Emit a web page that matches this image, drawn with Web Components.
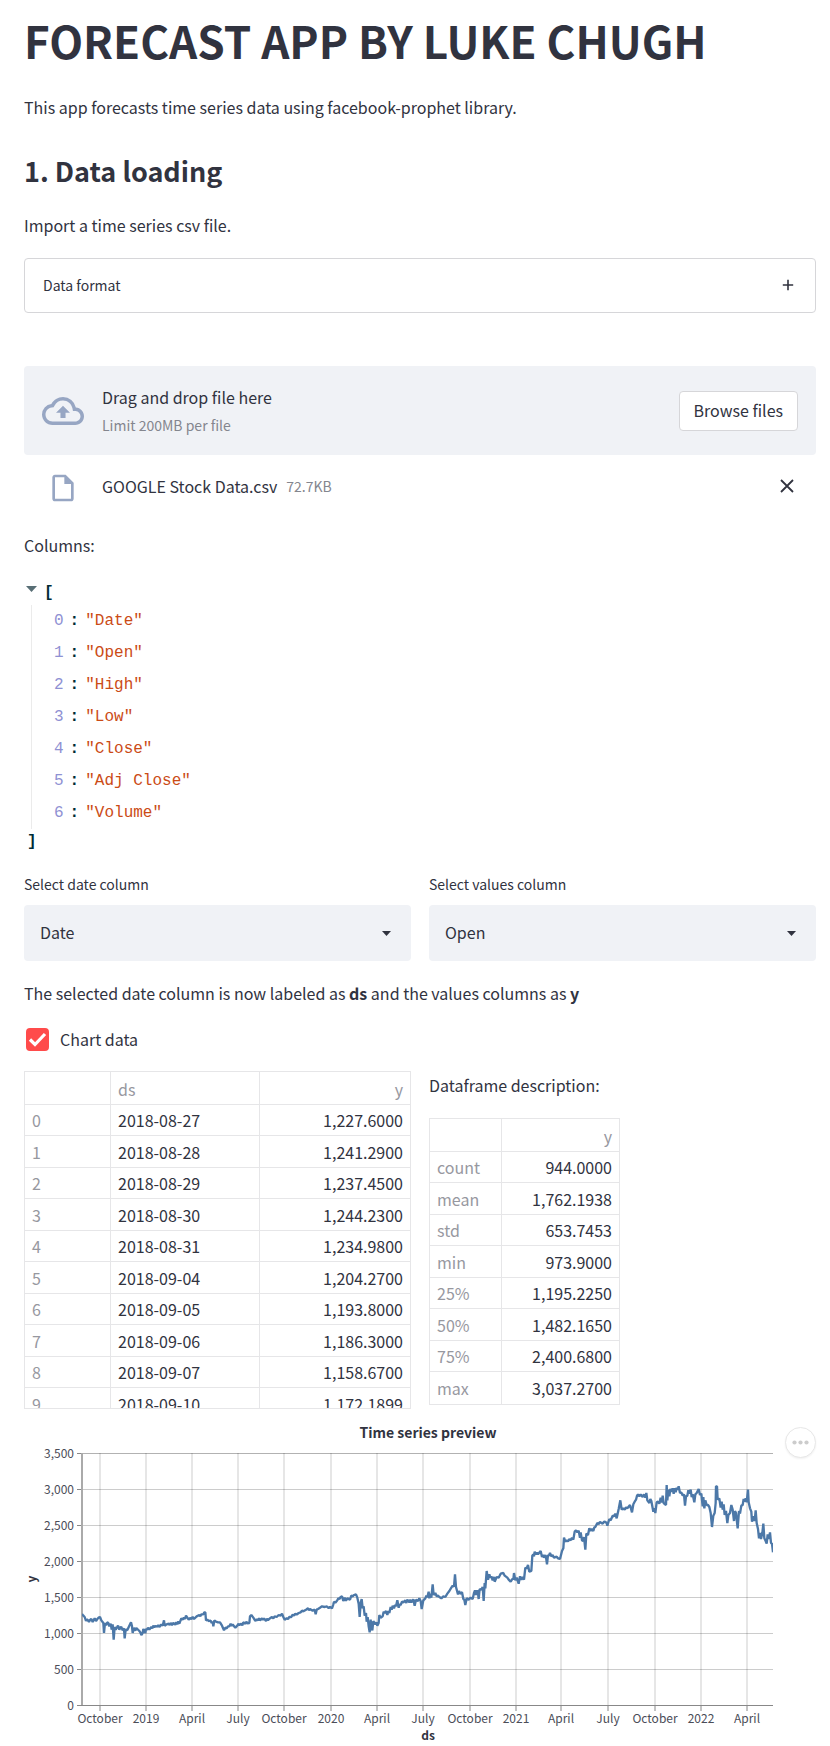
<!DOCTYPE html>
<html lang="en">
<head>
<meta charset="utf-8">
<meta name="viewport" content="width=device-width, initial-scale=1">
<title>Forecast app</title>
<style>
  html { background: #fff; }
  body {
    margin: 0;
    color: #31333f;
    font-family: "Noto Sans CJK SC", "Noto Sans", sans-serif;
    font-size: 16px;
    line-height: 28px;
  }
</style>
</head>
<body>
<forecast-app></forecast-app>

<script>
const define = (name, html, setup) => {
  const template = document.createElement('template');
  template.innerHTML = '<style>*{box-sizing:border-box}:host{display:block}</style>' + html;
  customElements.define(name, class extends HTMLElement {
    connectedCallback() {
      if (this.shadowRoot) return;
      const root = this.attachShadow({ mode: 'open' });
      root.append(template.content.cloneNode(true));
      if (setup) setup(this, root);
    }
  });
};

define('app-expander', `
  <style>
    details { border: 1px solid #d6d6d9; border-radius: 4px; }
    summary { display: flex; align-items: center; justify-content: space-between;
      padding: 13px 21px 14px 18px; font-size: 14px; line-height: 26px; list-style: none; cursor: pointer; }
    svg { display: block; }
    .body { padding: 0 18px 14px; }
  </style>
  <details>
    <summary><slot name="title"></slot>
      <svg width="12" height="12" viewBox="0 0 12 12" fill="none" stroke="#31333f" stroke-width="1.6"><path d="M6 .8v10.400M.8 6h10.400"/></svg>
    </summary>
    <div class="body"><slot></slot></div>
  </details>`);

define('file-uploader', `
  <style>
    .drop { display: flex; align-items: center; padding: 16px 18px; min-height: 89px;
      background: #f0f2f6; border-radius: 4px; }
    .icon { flex: none; width: 42px; margin-right: 18px; display: flex; justify-content: center; }
    .text { flex: 1; display: flex; flex-direction: column; }
    .drop svg, .file svg { display: block; fill: #97a6c3; }
    .small { font-size: 14px; color: #84868e; }
    button { font: inherit; color: inherit; cursor: pointer; }
    .browse { height: 40px; padding: 0 14px 2px; line-height: 28px; background: #fff;
      border: 1px solid #d6d6d9; border-radius: 4px; }
    .file { display: flex; align-items: center; padding: 12px 20px 2px 18px; }
    .file .icon { margin-top: 5px; }
    .file .text { flex-direction: row; gap: 9px; }
    .remove { display: flex; padding: 2px; border: 0; background: none; }
    .remove svg { fill: none; stroke: #31333f; stroke-width: 1.800; }
  </style>
  <div class="drop">
    <span class="icon"><svg width="42" height="42" viewBox="0 0 24 24"><path d="M19.350 10.040A7.490 7.490 0 0 0 12 4C9.110 4 6.600 5.640 5.350 8.040A5.994 5.994 0 0 0 0 14c0 3.310 2.690 6 6 6h13c2.760 0 5-2.240 5-5 0-2.640-2.050-4.780-4.650-4.960zM19 18H6c-2.210 0-4-1.790-4-4 0-2.050 1.530-3.760 3.560-3.970l1.070-.110.5-.950A5.469 5.469 0 0 1 12 6c2.620 0 4.880 1.860 5.390 4.430l.3 1.500 1.530.110A2.980 2.980 0 0 1 22 15c0 1.650-1.350 3-3 3zM8 13h2.550v3h2.900v-3H16l-4-4z"/></svg></span>
    <label class="text" for="file"><span>Drag and drop file here</span><span class="small">Limit 200MB per file</span></label>
    <input id="file" type="file" hidden>
    <button class="browse" type="button">Browse files</button>
  </div>
  <div class="file">
    <span class="icon"><svg width="32" height="32" viewBox="0 0 24 24"><path d="M14 2H6c-1.100 0-1.990.9-1.990 2L4 20c0 1.100.890 2 1.990 2H18c1.100 0 2-.9 2-2V8l-6-6zM6 20V4h7v5h5v11H6z"/></svg></span>
    <span class="text"><span>GOOGLE Stock Data.csv</span><span class="small">72.7KB</span></span>
    <button class="remove" type="button" aria-label="Remove file"><svg width="14" height="14" viewBox="0 0 14 14"><path d="M1 1l12 12M13 1L1 13"/></svg></button>
  </div>`, (host, root) => {
    root.querySelector('.browse').onclick = () => root.querySelector('#file').click();
  });

define('json-list', `
  <style>
    :host { font-family: "Liberation Mono", monospace; font-size: 16px; line-height: 32px; color: #002b36; }
    .open { display: flex; align-items: center; gap: 6px; line-height: 24px; font-weight: bold; }
    .toggle { padding: 0 1px 8px 2px; border: 0; background: none; display: flex; cursor: pointer; }
    ol { list-style: none; margin: 0 0 0 7px; padding: 0 0 0 22px; border-left: 1px solid #ebebeb; }
    li { display: flex; gap: 6px; }
    .key { color: #8f91d3; }
    .colon { font-weight: bold; }
    .value { color: #cb4b16; }
    .close { line-height: 26px; font-weight: bold; padding-left: 3px; }
  </style>
  <div class="open"><button class="toggle" aria-label="Collapse"><svg width="11" height="6" viewBox="0 0 11 6" fill="#586e75"><path d="M0 0h11L5.500 6z"/></svg></button><span>[</span></div>
  <ol></ol>
  <div class="close">]</div>`, (host, root) => {
    root.querySelector('ol').innerHTML = host.getAttribute('items').split(',').map((v, i) =>
      `<li><span class="key">${i}</span><span class="colon">:</span><span class="value">"${v}"</span></li>`).join('');
  });

define('select-field', `
  <style>
    label { display: block; font-size: 14px; line-height: 24px; margin-bottom: 9px; }
    .box { display: grid; align-items: center; background: #f0f2f6; border-radius: 4px; }
    select, svg { grid-area: 1 / 1; }
    select { appearance: none; width: 100%; height: 56px; padding: 0 40px 2px 16px; border: 0; background: none;
      font: inherit; color: inherit; }
    svg { justify-self: end; margin-right: 20px; fill: #31333f; pointer-events: none; }
  </style>
  <label for="field"></label>
  <div class="box">
    <select id="field"></select>
    <svg width="9" height="5" viewBox="0 0 9 5"><path d="M0 0h9L4.500 5z"/></svg>
  </div>`, (host, root) => {
    root.querySelector('label').textContent = host.getAttribute('label');
    root.querySelector('select').innerHTML = host.getAttribute('options').split(',').map(o =>
      `<option${o === host.getAttribute('value') ? ' selected' : ''}>${o}</option>`).join('');
  });

define('check-field', `
  <style>
    label { display: flex; align-items: center; gap: 11px; padding-left: 2px; }
    .box { display: grid; width: 23px; height: 23px; }
    input, svg { grid-area: 1 / 1; }
    input { appearance: none; margin: 0; width: 23px; height: 23px; border: 2px solid #a3a8b4; border-radius: 4px; }
    input:checked { background: #ff4b4b; border-color: #ff4b4b; }
    svg { pointer-events: none; fill: none; stroke: #fff; stroke-width: 3.200; }
    input:not(:checked) + svg { display: none; }
  </style>
  <label><span class="box"><input type="checkbox" checked><svg width="23" height="23" viewBox="0 0 23 23"><path d="M4 11.500l5 5L19 6"/></svg></span><slot></slot></label>`);

define('data-frame', `
  <style>
    :host { border: 1px solid #e6e6e8; overflow: hidden; }
    table { width: 100%; border-spacing: 0; table-layout: fixed; line-height: 24px; }
    th, td { height: 31px; padding: 3px 7px; border-right: 1px solid #e6e6e8; border-bottom: 1px solid #e6e6e8;
      text-align: left; font-weight: normal; white-space: nowrap; }
    th { color: #97989f; }
    tr:nth-child(even) > * { height: 32px; }
    thead th { height: 32px; padding-top: 5px; }
    tr > :last-child { border-right: 0; text-align: right; }
    :host([fit]) tbody tr:last-child > * { border-bottom: 0; }
  </style>
  <table><colgroup></colgroup><thead></thead><tbody></tbody></table>`, (host, root) => {
    const rows = host.getAttribute('rows').split(';').map(r => r.split('|'));
    const head = host.getAttribute('head').split('|');
    root.querySelector('colgroup').innerHTML = host.getAttribute('cols').split('|').map(w => `<col style="width:${w}">`).join('');
    root.querySelector('thead').innerHTML = '<tr>' + head.map(h => `<th scope="col">${h}</th>`).join('') + '</tr>';
    root.querySelector('tbody').innerHTML = rows.map(r =>
      '<tr>' + r.map((c, i) => i ? `<td>${c}</td>` : `<th scope="row">${c}</th>`).join('') + '</tr>').join('');
  });

/* Price line, stored as x,y pairs at three units per pixel of the plot area. */
const SERIES = [
  [240, 510, '6,103 10,108 14,112 18,124 21,119 24,122 27,127 30,121 34,118 38,127 44,116 48,124 52,118 56,114 60,112 64,122 70,130 72,160 75,130 78,137 81,130 84,128 88,140 92,132 95,150 98,134 101,180 104,142 107,150 110,145 114,138 118,150 121,143 124,142 128,152 132,146 134,176 137,150 142,151 148,138 153,128 156,140 158,160 162,144 166,153 169,145 172,148 178,154 181,158 184,166 188,160 190,148 193,153 196,160 198,148 201,150 204,144 208,150 214,142 217,146 220,138 223,143 226,139 232,141 235,136 238,142 244,134 248,138 252,122 254,138 260,134 266,132 269,136 272,130 276,136 280,130 286,135 289,128 292,134 295,125 298,132 304,116 308,120 312,114 315,118 318,108 322,114 326,120 330,115 334,118 338,112 342,118 350,110 358,106 361,110 364,104 370,104 373,98 376,98 378,122 382,120 386,124 392,123 395,130 398,126 400,140 403,122 408,126 414,128 420,128 426,138 432,152 436,144 440,146 444,140 448,140 452,132 455,139 458,134 464,142 466,144 472,138 475,132 478,136 484,132 487,137 490,128 496,132 499,126 502,131 508,130 510,110 514,106 520,114 526,124 530,119 534,122 537,116 540,122 546,116 549,121 552,116 558,124 561,117 564,121 570,116 576,112 580,116 584,110 590,112 596,106 602,108 606,102 610,112 614,120 620,116 624,118 628,112 634,112 638,105 642,108 646,102 650,105 656,100 662,98 666,93 670,95 678,90 684,86 687,92 690,88 698,93 704,90 707,104 710,90 714,88 720,84'],
  [930, 360, '36,230 44,232 50,230 56,235 60,232 66,236 70,224 72,216 76,219 82,212 85,206 88,208 92,202 96,200 100,214 104,204 108,213 112,206 120,210 124,198 128,200 132,196 138,194 142,204 146,222 149,262 152,220 155,208 158,236 161,230 164,258 168,250 170,276 173,262 176,290 179,308 182,270 184,296 187,302 190,274 196,284 199,278 202,288 206,280 208,256 212,264 218,260 221,246 224,250 228,244 232,256 235,244 238,250 242,232 245,240 248,228 252,236 255,226 258,230 262,212 266,234 269,224 272,226 276,216 280,218 286,212 289,220 292,210 298,218 301,210 304,218 310,209 314,228 318,210 324,214 328,206 332,214 335,238 340,212 346,206 349,198 352,203 356,186 358,206 361,192 364,204 368,164 371,196 376,190 380,200 384,198 388,202 394,206 400,200 406,202 412,192 418,184 424,174 428,168 432,171 435,134 438,172 444,194 447,184 450,192 456,188 460,208 463,210 466,226 470,206 476,210 482,204 488,208 492,190 495,182 498,196 502,182 504,190 506,208 509,178 514,180 518,172 521,214 524,160 526,176 530,124 534,150 538,134 541,144 544,140 548,152 552,142 554,156 560,142 566,144 572,132 580,130 584,138 592,144 596,150 602,156 608,147 610,150 612,130 616,152 620,144 626,162 630,140 634,150 638,142 642,150 646,114 650,117 654,106 658,126 664,124 667,78 670,74 672,80 674,66 678,74 681,69 684,74 692,64 696,82'],
  [1620, 180, '9,256 12,264 16,256 18,262 21,284 24,256 27,258 30,250 34,260 38,256 42,264 50,261 54,266 60,268 66,244 70,236 72,204 76,216 80,212 84,215 88,208 92,212 96,204 100,210 104,186 108,182 112,188 116,183 120,204 122,188 126,212 129,214 132,202 136,240 139,192 144,196 148,176 152,183 156,178 160,184 163,173 166,172 172,160 176,163 180,157 188,162 192,156 196,157 200,160 202,168 208,148 212,152 218,138 222,140 226,132 230,146 236,118 241,92 245,120 250,116 254,120 258,113 262,116 270,106 276,128 280,104 284,96 288,90 291,78 294,74 298,80 302,74 308,82 312,74 316,84 319,70 322,92 328,100 331,88 334,94 340,126 343,116 346,130 350,98 354,96 358,102 362,84 366,98 368,78 371,100 378,106 380,46 382,92 385,60 388,80 391,58 395,66 398,56 401,72 404,56 407,68 410,54 413,60 416,50 420,70 424,68 428,78 432,74 435,108 438,80 442,78 445,62 448,72 452,60 455,82 458,74 463,98 466,74 470,70 476,58 480,76 484,72 488,110 490,82 493,116 496,92 500,106 504,106 508,112 512,130 516,172 520,138 524,130 527,100 528,50 531,50 533,90 538,86 542,114 545,96 548,120 551,104 554,136 558,124 562,160 565,136 570,130 574,106 578,120 582,154 585,124 588,130 593,176 597,124 600,132 604,108 608,106 611,88 614,96 617,86 620,98 624,60 626,98 630,116 634,126 636,156 640,140 644,154 647,122 650,160 654,178 657,206 660,190 663,208 667,190 670,162 673,206 677,214 680,222 683,194 687,208 690,188 693,220 696,222 699,248']
].map(([dx, dy, s]) => s.split(' ').map(p => {
  const [x, y] = p.split(',').map(Number);
  return (x + dx) + ',' + (y + dy);
}).join(' ')).join(' ');

define('series-chart', `
  <style>
    :host { position: relative; }
    svg { display: block; width: 100%; }
    text { fill: #4b4d58; font-size: 12px; }
    .bold { font-weight: bold; fill: #31333f; }
    .menu { position: absolute; top: 10px; right: 0; width: 31px; height: 31px; padding: 0; display: grid;
      place-items: center; background: #fff; border: 1px solid #e8e8e8; border-radius: 50%; cursor: pointer;
      box-shadow: 0 1px 2px rgb(0 0 0 / 6%); }
    .menu svg { width: 17px; fill: #ccc; }
  </style>
  <svg class="plot" viewBox="0 0 792 329" role="img" aria-label="Time series preview"></svg>
  <button class="menu" aria-label="Chart actions"><svg width="17" height="5" viewBox="0 0 17 5"><circle cx="2.500" cy="2.500" r="2.100"/><circle cx="8.500" cy="2.500" r="2.100"/><circle cx="14.500" cy="2.500" r="2.100"/></svg></button>`,
  (host, root) => {
    const left = 58, right = 749, top = 36, bottom = 288;
    const xs = [76, 122, 168, 214, 260, 307, 353, 399, 446, 492, 537, 584, 631, 677, 723];
    const months = 'October 2019 April July October 2020 April July October 2021 April July October 2022 April'.split(' ');
    let s = '';
    xs.forEach((x, i) => {
      s += `<path d="M${x} ${top}V${bottom}" stroke="#000" stroke-opacity=".2"/>`
        + `<path d="M${x} ${bottom}v6" stroke="#888"/>`
        + `<text x="${x}" y="306" text-anchor="middle">${months[i]}</text>`;
    });
    for (let k = 0; k <= 7; k++) {
      const y = bottom - k * 36;
      s += `<path d="M${left} ${y}.500H${right}" stroke="#000" stroke-opacity="${k && k < 7 ? '.2' : '.3'}"/>`
        + `<path d="M${left - 5} ${y}.500h5" stroke="#888"/>`
        + `<text x="${left - 8}" y="${y + 5}" text-anchor="end">${(k * 500).toLocaleString('en-US')}</text>`;
    }
    s += `<path d="M${left} ${top}V${bottom}" stroke="#aaa" stroke-width="2"/>`
      + `<path d="M${left} ${bottom}.500H${right}" stroke="#888"/>`
      + `<svg x="${left}" y="${top}" width="691" height="252" viewBox="246 130 2073 756" style="width:691px"><polyline points="${SERIES}" fill="none" stroke="#4c78a8" stroke-width="7" stroke-linejoin="bevel"/></svg>`
      + `<text class="bold" x="404" y="21" text-anchor="middle" style="font-size:14px">Time series preview</text>`
      + `<text class="bold" x="404" y="323" text-anchor="middle">ds</text>`
      + `<text class="bold" transform="translate(12 162) rotate(-90)" text-anchor="middle">y</text>`;
    root.querySelector('.plot').innerHTML = s;
  });

define('forecast-app', `
  <style>
    main { padding: 0 14px 0 24px; }
    h1, h2, p { margin: 0; }
    h1 { font-size: 44px; line-height: 54px; padding: 13px 0 26px; }
    h2 { font-size: 27px; line-height: 36px; padding: 32px 0 22px; font-weight: 600; }
    app-expander { margin: 19px 0 53px; }
    .columns { margin-top: 25px; }
    json-list { margin: 22px 0 17px; }
    .cols { display: grid; grid-template-columns: 1fr 1fr; gap: 18px; }
    .note { margin: 18px 0; }
    .tables { margin-top: 18px; align-items: start; }
    .frame { height: 338px; }
    .stats { width: 191px; margin-top: 19px; }
    series-chart { margin-top: 8px; }
  </style>
  <main>
    <h1>FORECAST APP BY LUKE CHUGH</h1>
    <p>This app forecasts time series data using facebook-prophet library.</p>
    <h2>1. Data loading</h2>
    <p>Import a time series csv file.</p>
    <app-expander><span slot="title">Data format</span></app-expander>
    <file-uploader></file-uploader>
    <p class="columns">Columns:</p>
    <json-list items="Date,Open,High,Low,Close,Adj Close,Volume"></json-list>
    <div class="cols">
      <select-field label="Select date column" value="Date" options="Date,Open,High,Low,Close,Adj Close,Volume"></select-field>
      <select-field label="Select values column" value="Open" options="Date,Open,High,Low,Close,Adj Close,Volume"></select-field>
    </div>
    <p class="note">The selected date column is now labeled as <b>ds</b> and the values columns as <b>y</b></p>
    <check-field>Chart data</check-field>
    <div class="cols tables">
      <data-frame class="frame" head="|ds|y" cols="86px|149px|auto" rows="0|2018-08-27|1,227.6000;1|2018-08-28|1,241.2900;2|2018-08-29|1,237.4500;3|2018-08-30|1,244.2300;4|2018-08-31|1,234.9800;5|2018-09-04|1,204.2700;6|2018-09-05|1,193.8000;7|2018-09-06|1,186.3000;8|2018-09-07|1,158.6700;9|2018-09-10|1,172.1899"></data-frame>
      <div>
        <p>Dataframe description:</p>
        <data-frame class="stats" fit head="|y" cols="72px|auto" rows="count|944.0000;mean|1,762.1938;std|653.7453;min|973.9000;25%|1,195.2250;50%|1,482.1650;75%|2,400.6800;max|3,037.2700"></data-frame>
      </div>
    </div>
    <series-chart></series-chart>
  </main>`);
</script>
</body>
</html>
